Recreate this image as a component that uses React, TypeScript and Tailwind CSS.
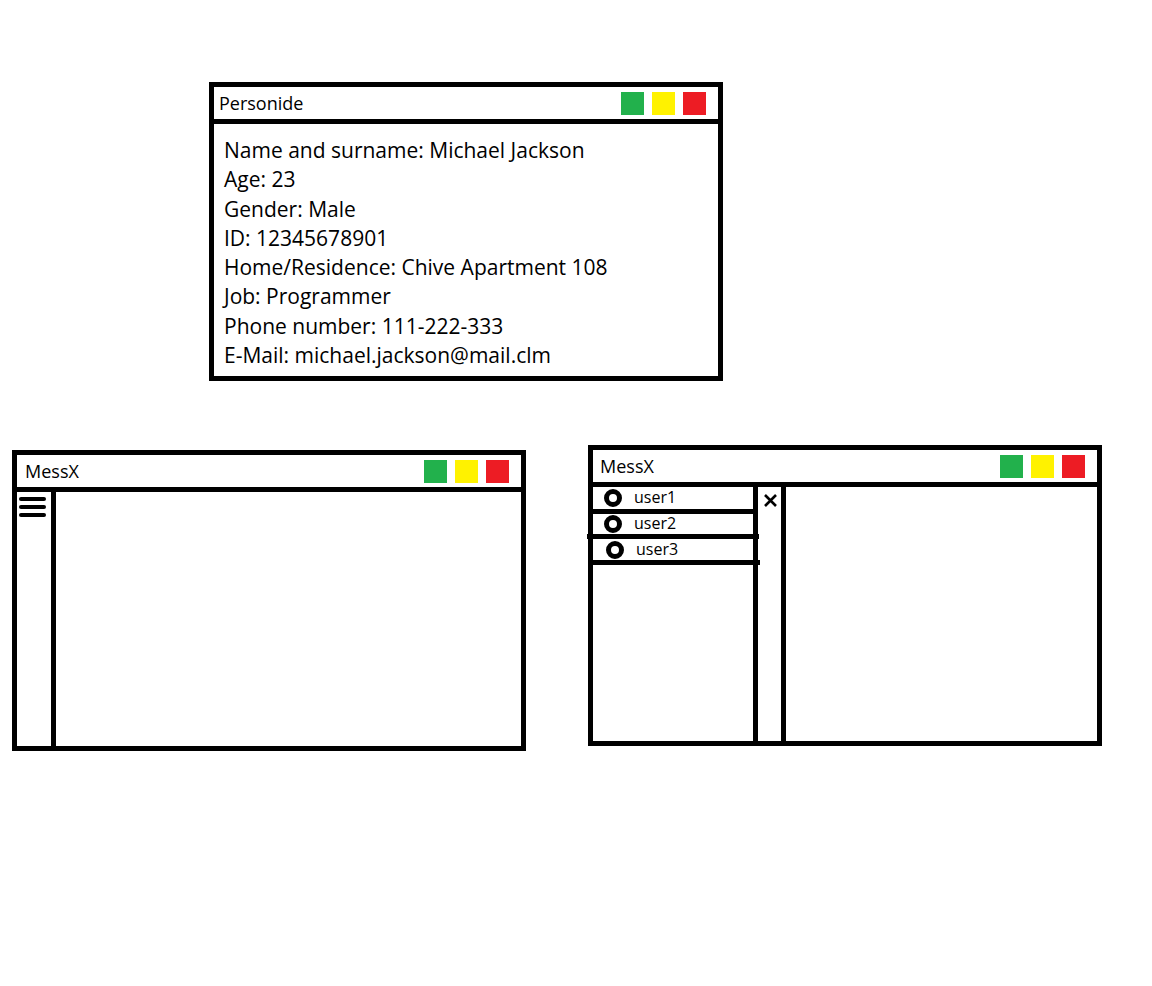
import type { ReactNode } from "react";

const person = [
  "Name and surname: Michael Jackson",
  "Age: 23",
  "Gender: Male",
  "ID: 12345678901",
  "Home/Residence: Chive Apartment 108",
  "Job: Programmer",
  "Phone number: 111-222-333",
  "E-Mail: michael.jackson@mail.clm",
];

// hand-drawn rows: the lower lines overshoot the column a little
const users = [
  { name: "user1", row: "h-[27px] pl-[11px]" },
  { name: "user2", row: "h-[25px] -ml-[6px] -mr-[6px] pl-[17px]" },
  { name: "user3", row: "h-[26px] -mr-[7px] pl-[13px]" },
];

function WindowButtons() {
  return (
    <div className="flex gap-2">
      <span className="w-[23px] h-[23px] bg-[#22b14c]" />
      <span className="w-[23px] h-[23px] bg-[#fff200]" />
      <span className="w-[23px] h-[23px] bg-[#ed1c24]" />
    </div>
  );
}

type WindowProps = {
  title: string;
  titleClass: string;
  className: string;
  children: ReactNode;
};

function Window({ title, titleClass, className, children }: WindowProps) {
  return (
    <div className={`absolute flex flex-col border-[5px] border-black bg-white ${className}`}>
      <div className="flex h-[32px] shrink-0 items-center justify-between border-b-[5px] border-black box-content pr-[12px]">
        <span className={titleClass}>{title}</span>
        <WindowButtons />
      </div>
      <div className="flex flex-1 min-h-0">{children}</div>
    </div>
  );
}

function UserDot() {
  return <span className="w-[18px] h-[18px] rounded-full border-[5px] border-black shrink-0" />;
}

export default function App() {
  return (
    <div
      className="relative w-[1152px] h-[986px] bg-white text-black"
      style={{ fontFamily: '"Open Sans", "Noto Sans", sans-serif' }}
    >
      <Window
        title="Personide"
        titleClass="pl-[5px] text-[18px] leading-none"
        className="left-[209px] top-[82px] w-[514px] h-[299px]"
      >
        <div className="pl-[10px] pt-[12px] text-[21px] leading-[29.3px]">
          {person.map((line) => (
            <p key={line}>{line}</p>
          ))}
        </div>
      </Window>

      <Window
        title="MessX"
        titleClass="pl-[8px] text-[18px] leading-none"
        className="left-[12px] top-[450px] w-[514px] h-[301px]"
      >
        <div className="w-[39px] shrink-0 border-r-[5px] border-black pt-[5px] pl-[2px]">
          <div className="flex w-[27px] flex-col gap-[4px]">
            <span className="h-[4px] rounded-full bg-black" />
            <span className="h-[4px] rounded-full bg-black" />
            <span className="h-[4px] rounded-full bg-black" />
          </div>
        </div>
        <div className="flex-1" />
      </Window>

      <Window
        title="MessX"
        titleClass="pl-[7px] text-[18px] leading-none"
        className="left-[588px] top-[445px] w-[514px] h-[301px]"
      >
        <div className="relative z-10 w-[165px] shrink-0 border-r-[5px] border-black">
          {users.map((u) => (
            <div
              key={u.name}
              className={`flex items-center gap-[12px] border-b-[5px] border-black text-[16px] ${u.row}`}
            >
              <UserDot />
              <span className="leading-none -mt-[2px]">{u.name}</span>
            </div>
          ))}
        </div>
        <div className="w-[28px] shrink-0 border-r-[5px] border-black pt-[7px] pl-[6px]">
          <svg width="13" height="13" viewBox="0 0 13 13">
            <path d="M1 1 L12 12 M12 1 L1 12" stroke="black" strokeWidth="2.6" />
          </svg>
        </div>
        <div className="flex-1" />
      </Window>
    </div>
  );
}
